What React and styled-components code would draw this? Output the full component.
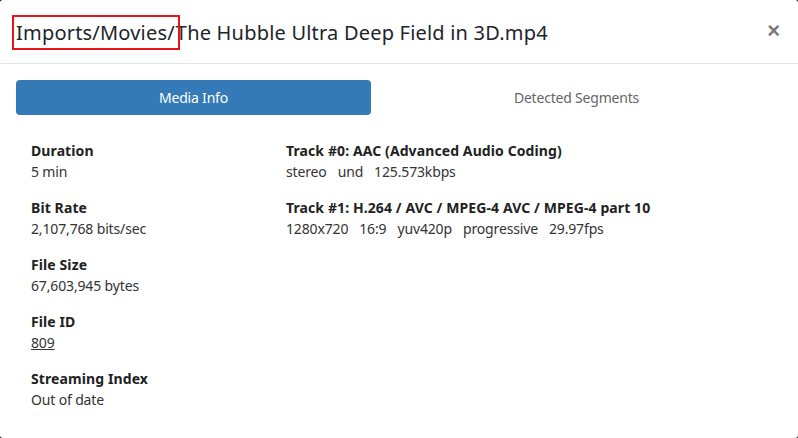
import React from "react";
import styled, { createGlobalStyle } from "styled-components";

const Global = createGlobalStyle`
  html, body { margin: 0; padding: 0; background: #2b2b2b; }
  body { font-family: "Noto Sans", "Open Sans", sans-serif; color: #212529; }
  * { box-sizing: border-box; }
`;

const Modal = styled.div`
  width: 798px;
  height: 438px;
  background: #fff;
  border-radius: 3px;
  overflow: hidden;
`;

const Header = styled.div`
  height: 64px;
  display: flex;
  align-items: center;
  justify-content: space-between;
  padding: 2px 18px 0 16px;
  border-bottom: 1px solid #e5e5e5;
`;

const Title = styled.h4`
  margin: 0;
  font-size: 20px;
  font-weight: 400;
  color: #212529;
  white-space: nowrap;
  letter-spacing: 0.2px;
`;

const Marked = styled.span`
  outline: 2px solid #e8141a;
  outline-offset: 2px;
  padding: 0 1px 0 0;
`;

const Close = styled.button`
  border: 0;
  background: none;
  padding: 0 0 3px;
  font-size: 22px;
  font-weight: 700;
  line-height: 1;
  color: #7a7a7a;
  font-family: "Liberation Sans", Arial, sans-serif;
  cursor: pointer;
`;

const Body = styled.div`
  padding: 16px 44px 0 16px;
`;

const Tabs = styled.div`
  display: grid;
  grid-template-columns: 1fr 1fr;
  gap: 28px;
`;

const Tab = styled.div`
  height: 35px;
  border-radius: 4px;
  display: flex;
  align-items: center;
  justify-content: center;
  font-size: 14px;
  letter-spacing: -0.2px;
  background: ${p => (p.active ? "#337ab7" : "transparent")};
  color: ${p => (p.active ? "#fff" : "#666")};
`;

const Columns = styled.div`
  display: grid;
  grid-template-columns: 255px 1fr;
  padding: 26px 0 0 15px;
`;

const Field = styled.div`
  margin-bottom: 16px;
  font-size: 14px;
  line-height: 20px;
`;

const Label = styled.div`
  font-weight: 700;
  letter-spacing: 0.1px;
  color: #222;
`;

const Value = styled.div`
  margin-top: 1px;
  letter-spacing: -0.15px;
  color: #333;
`;

const Link = styled.a`
  color: #333;
  text-decoration: underline;
`;

const Item = styled.span`
  margin-right: 11px;
`;

const info = [
  { label: "Duration", value: "5 min" },
  { label: "Bit Rate", value: "2,107,768 bits/sec" },
  { label: "File Size", value: "67,603,945 bytes" },
  { label: "File ID", value: <Link href="#">809</Link> },
  { label: "Streaming Index", value: "Out of date" },
];

const tracks = [
  { label: "Track #0: AAC (Advanced Audio Coding)", items: ["stereo", "und", "125.573kbps"] },
  {
    label: "Track #1: H.264 / AVC / MPEG-4 AVC / MPEG-4 part 10",
    items: ["1280x720", "16:9", "yuv420p", "progressive", "29.97fps"],
  },
];

export default function App() {
  return (
    <Modal>
      <Global />
      <Header>
        <Title>
          <Marked>Imports/Movies/</Marked>The Hubble Ultra Deep Field in 3D.mp4
        </Title>
        <Close>×</Close>
      </Header>
      <Body>
        <Tabs>
          <Tab active>Media Info</Tab>
          <Tab>Detected Segments</Tab>
        </Tabs>
        <Columns>
          <div>
            {info.map(f => (
              <Field key={f.label}>
                <Label>{f.label}</Label>
                <Value>{f.value}</Value>
              </Field>
            ))}
          </div>
          <div>
            {tracks.map(t => (
              <Field key={t.label}>
                <Label>{t.label}</Label>
                <Value>
                  {t.items.map(i => (
                    <Item key={i}>{i}</Item>
                  ))}
                </Value>
              </Field>
            ))}
          </div>
        </Columns>
      </Body>
    </Modal>
  );
}
